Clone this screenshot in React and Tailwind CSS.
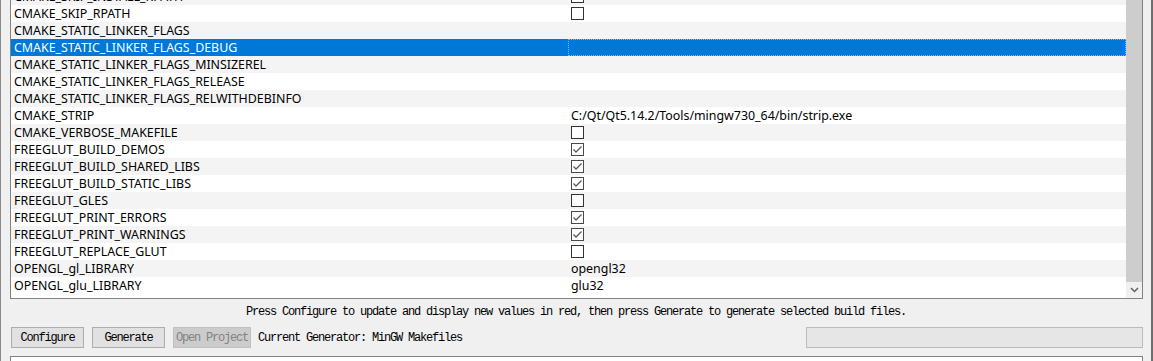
import React from 'react';

const rows = [
  { name: 'CMAKE_SKIP_INSTALL_RPATH', type: 'bool', value: false },
  { name: 'CMAKE_SKIP_RPATH', type: 'bool', value: false },
  { name: 'CMAKE_STATIC_LINKER_FLAGS', type: 'text', value: '' },
  { name: 'CMAKE_STATIC_LINKER_FLAGS_DEBUG', type: 'text', value: '', selected: true },
  { name: 'CMAKE_STATIC_LINKER_FLAGS_MINSIZEREL', type: 'text', value: '' },
  { name: 'CMAKE_STATIC_LINKER_FLAGS_RELEASE', type: 'text', value: '' },
  { name: 'CMAKE_STATIC_LINKER_FLAGS_RELWITHDEBINFO', type: 'text', value: '' },
  { name: 'CMAKE_STRIP', type: 'text', value: 'C:/Qt/Qt5.14.2/Tools/mingw730_64/bin/strip.exe' },
  { name: 'CMAKE_VERBOSE_MAKEFILE', type: 'bool', value: false },
  { name: 'FREEGLUT_BUILD_DEMOS', type: 'bool', value: true },
  { name: 'FREEGLUT_BUILD_SHARED_LIBS', type: 'bool', value: true },
  { name: 'FREEGLUT_BUILD_STATIC_LIBS', type: 'bool', value: true },
  { name: 'FREEGLUT_GLES', type: 'bool', value: false },
  { name: 'FREEGLUT_PRINT_ERRORS', type: 'bool', value: true },
  { name: 'FREEGLUT_PRINT_WARNINGS', type: 'bool', value: true },
  { name: 'FREEGLUT_REPLACE_GLUT', type: 'bool', value: false },
  { name: 'OPENGL_gl_LIBRARY', type: 'text', value: 'opengl32' },
  { name: 'OPENGL_glu_LIBRARY', type: 'text', value: 'glu32' },
];

const Checkbox = ({ checked }) => (
  <svg width="13" height="13" viewBox="0 0 13 13" className="block">
    <rect x="0.5" y="0.5" width="12" height="12" fill="#fff" stroke={checked ? '#4a4a4a' : '#333'} />
    {checked && <path d="M2.5 6.5 L5 9 L10.5 3.5" fill="none" stroke="#5a5a5a" strokeWidth="1.3" />}
  </svg>
);

const Row = ({ row, index }) => {
  const bg = row.selected ? 'bg-[#0078d7] text-white' : index % 2 === 0 ? 'bg-[#f4f4f4] text-black' : 'bg-white text-black';
  return (
    <div className={`flex h-[17px] ${bg}`}>
      <div className="w-[557px] shrink-0 pl-[3px] leading-[17px] whitespace-nowrap">{row.name}</div>
      <div className={`flex-1 pl-[3px] flex items-center ${row.selected ? 'border border-dotted border-[#f39c2a]' : ''}`}>
        {row.type === 'bool' ? <Checkbox checked={row.value} /> : <span className="leading-[17px] whitespace-nowrap">{row.value}</span>}
      </div>
    </div>
  );
};

const Button = ({ children, disabled, w }) => (
  <div
    className={`h-[21px] ${w} flex items-center justify-center border ${
      disabled ? 'bg-[#cccccc] border-[#bfbfbf] text-[#838383]' : 'bg-[#e1e1e1] border-[#adadad] text-black'
    }`}
  >
    {children}
  </div>
);

export default function App() {
  const mono = { fontFamily: '"Liberation Mono", "Noto Sans CJK SC", monospace' };
  return (
    <div className="w-[1153px] h-[361px] overflow-hidden bg-[#f0f0f0] border-l border-l-[#8a8a8a] border-r-2 border-r-[#6e6e6e] flex flex-col">
      {/* cache table */}
      <div className="ml-[9px] w-[1133px] h-[299px] shrink-0 border-x border-b border-[#828282] flex bg-white">
        <div className="w-[1115px] h-[298px] overflow-hidden text-[12.4px]" style={{ fontFamily: '"Noto Sans", sans-serif' }}>
          <div className="-mt-[12px]">
            {rows.map((r, i) => (
              <Row key={r.name} row={r} index={i} />
            ))}
          </div>
        </div>
        <div className="w-[16px] h-[298px] flex flex-col bg-[#f0f0f0]">
          <div className="h-[282px] bg-[#cdcdcd]" />
          <div className="flex-1 flex items-center justify-center">
            <svg width="9" height="6" viewBox="0 0 9 6">
              <path d="M1 1 L4.5 4.5 L8 1" fill="none" stroke="#606060" strokeWidth="1.5" />
            </svg>
          </div>
        </div>
      </div>

      {/* message */}
      <div className="h-[28px] shrink-0 pt-[6px] text-center text-[12px] tracking-[-1.2px] leading-[14px] text-black" style={mono}>
        Press Configure to update and display new values in red, then press Generate to generate selected build files.
      </div>

      {/* buttons */}
      <div className="h-[21px] shrink-0 flex items-center ml-[10px] mr-[8px] text-[12px] tracking-[-1.2px]" style={mono}>
        <Button w="w-[73px]">Configure</Button>
        <div className="w-[8px]" />
        <Button w="w-[73px]">Generate</Button>
        <div className="w-[8px]" />
        <Button w="w-[78px]" disabled>Open Project</Button>
        <span className="ml-[7px] text-black whitespace-nowrap">Current Generator: MinGW Makefiles</span>
        <div className="ml-auto w-[337px] h-[21px] bg-[#e6e6e6] border border-[#bcbcbc]" />
      </div>

      {/* output log */}
      <div className="mt-[8px] ml-[9px] w-[1133px] flex-1 border-x border-t border-[#828282] bg-white" />
    </div>
  );
}
